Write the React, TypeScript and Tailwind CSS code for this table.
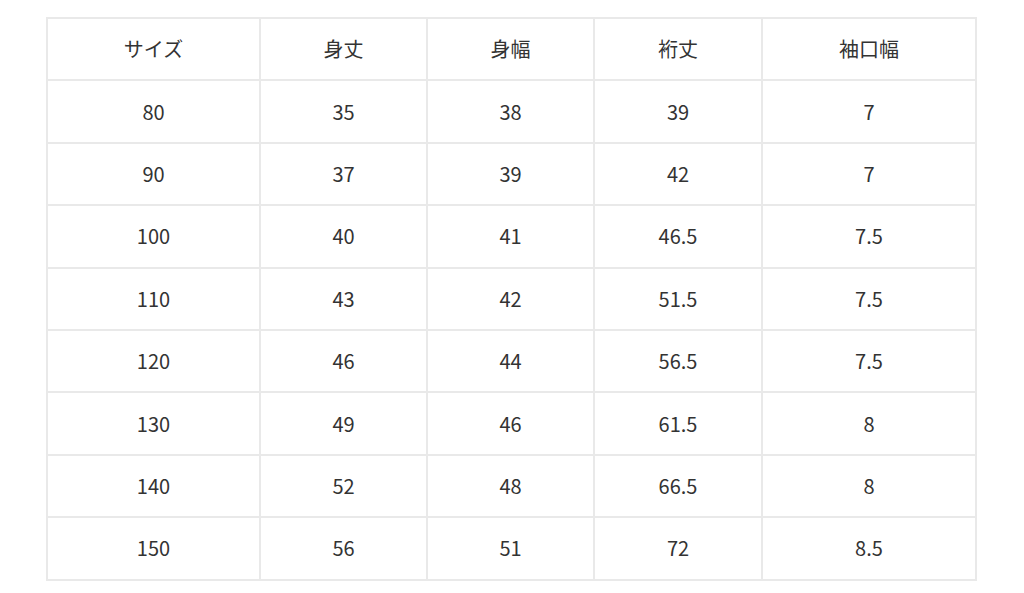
import React from 'react';

const headers = ['サイズ', '身丈', '身幅', '裄丈', '袖口幅'];

const rows: string[][] = [
  ['80', '35', '38', '39', '7'],
  ['90', '37', '39', '42', '7'],
  ['100', '40', '41', '46.5', '7.5'],
  ['110', '43', '42', '51.5', '7.5'],
  ['120', '46', '44', '56.5', '7.5'],
  ['130', '49', '46', '61.5', '8'],
  ['140', '52', '48', '66.5', '8'],
  ['150', '56', '51', '72', '8.5'],
];

export default function App() {
  return (
    <div className="w-[1024px] h-[593px] bg-white pt-[17px] pl-[46px] font-['Noto_Sans_CJK_JP','Noto_Sans',sans-serif] text-[20px] text-[#333333]">
      <div className="w-[931px] grid grid-cols-[213px_167px_167px_168px_214px] border-l-2 border-t-2 border-[#e9e9e9]">
        {[headers, ...rows].map((row, i) =>
          row.map((cell, j) => (
            <div
              key={`${i}-${j}`}
              className="h-[62.4px] flex items-center justify-center border-r-2 border-b-2 border-[#e9e9e9]"
            >
              {cell}
            </div>
          ))
        )}
      </div>
    </div>
  );
}
